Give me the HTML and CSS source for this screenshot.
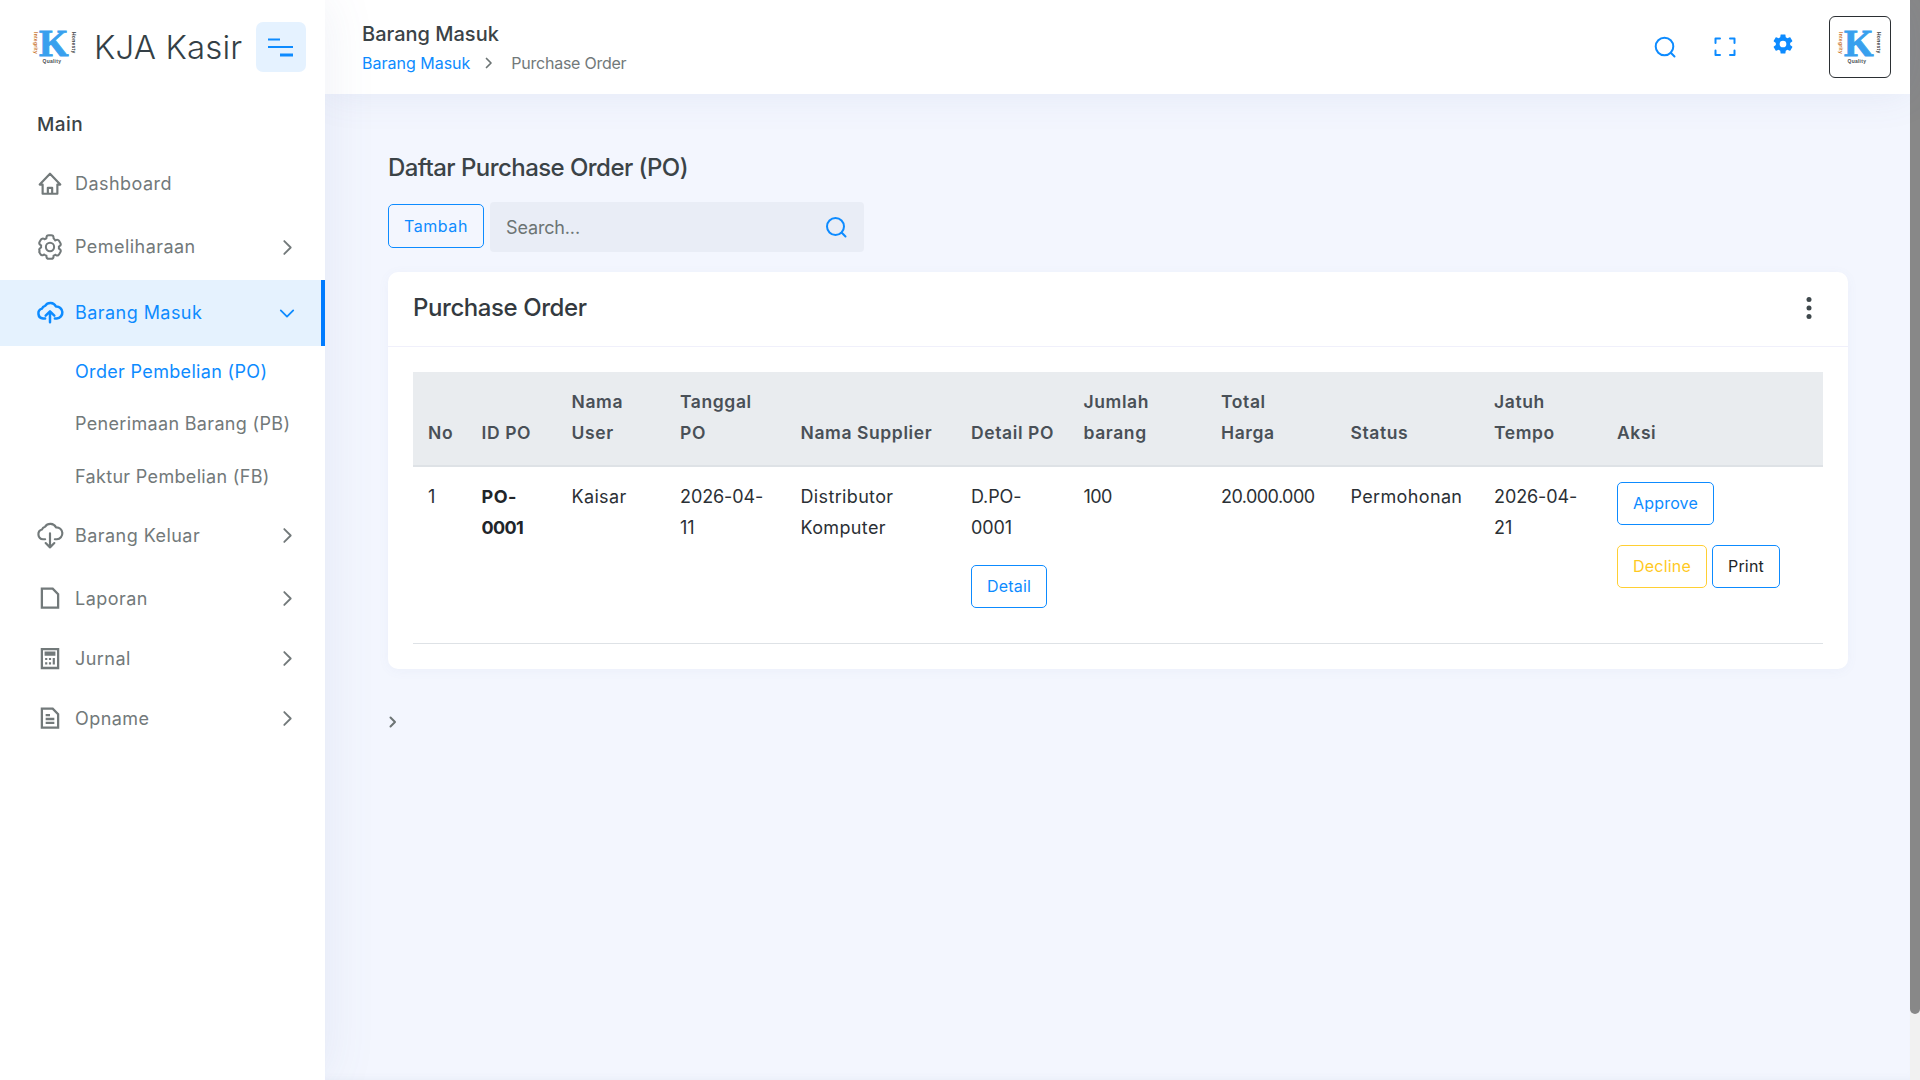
FILE: index.html
```html
<!DOCTYPE html>
<html lang="id">
<head>
<meta charset="utf-8">
<title>KJA Kasir</title>
<link rel="stylesheet" href="styles.css">
</head>
<body>
<div class="app">
  <aside class="sidebar">
    <div class="brand">
      <svg class="logo" viewBox="0 0 44 34" width="44" height="34">
        <text class="logo-k" x="6" y="26">K</text>
        <text class="logo-int" transform="translate(0.5 2) rotate(90)">Integrity</text>
        <text class="logo-hon" transform="translate(38.500 2) rotate(90)">Honesty</text>
        <text class="logo-qua" x="9.500" y="33">Quality</text>
      </svg>
      <span class="brand-name">KJA Kasir</span>
      <button class="toggle" type="button" aria-label="menu">
        <svg viewBox="0 0 26 20" width="26" height="20"><path class="bar" d="M0 2.500h12" stroke-width="2"/><path class="bar" d="M0 10h25" stroke-width="2"/><path class="bar" d="M12 18h13" stroke-width="3"/></svg>
      </button>
    </div>
    <div class="menu-label">Main</div>
    <nav class="menu">
      <a class="item short">
        <svg class="ico" viewBox="0 0 24 24"><path class="line" d="M2.500 12.500 12 2.500l9.500 10H18.800V21H5.200V12.500z M10 21V15.500h4V21"/></svg>
        <span class="label">Dashboard</span>
      </a>
      <a class="item">
        <svg class="ico" viewBox="1 1 22 22"><path class="line thin" d="M2.845 16.136l1 1.730c.531.917 1.809 1.261 2.730.730l.529-.306A8.100 8.100 0 0 0 9 19.402V20c0 1.103.897 2 2 2h2c1.103 0 2-.897 2-2v-.598a8.132 8.132 0 0 0 1.484-.866l.530.306c.923.530 2.198.188 2.731-.731l.999-1.729a2.001 2.001 0 0 0-.731-2.732l-.505-.292a7.718 7.718 0 0 0 0-1.720l.505-.292a2.002 2.002 0 0 0 .731-2.732l-.999-1.729c-.531-.920-1.808-1.265-2.731-.732l-.530.306A8.200 8.200 0 0 0 15 4.598V4c0-1.103-.897-2-2-2h-2c-1.103 0-2 .897-2 2v.598a8.132 8.132 0 0 0-1.484.866l-.530-.306c-.921-.533-2.200-.187-2.730.731l-1 1.730a2.002 2.002 0 0 0 .731 2.732l.505.292a7.683 7.683 0 0 0 0 1.719l-.505.292a2.002 2.002 0 0 0-.731 2.732z"/><circle class="line thin" cx="12" cy="12" r="3.500"/></svg>
        <span class="label">Pemeliharaan</span>
        <svg class="chev" viewBox="0 0 12 18"><path class="line" d="M2.500 2l7 7-7 7"/></svg>
      </a>
      <a class="item active">
        <svg class="ico" viewBox="0 0 24 24"><path class="line bold" d="M7.500 17H5.600A4.600 4.600 0 0 1 4.600 8 4 4 0 0 1 7.500 5.400 5.800 5.800 0 0 1 17.500 6 5.200 5.200 0 0 1 18.300 17H16.500"/><path class="line bold" d="M12 20.500V10.500M8 14.500l4-4 4 4"/></svg>
        <span class="label">Barang Masuk</span>
        <svg class="chev-down" viewBox="0 0 18 12"><path class="line" d="M2 2.500l7 7 7-7"/></svg>
      </a>
      <div class="sub">
        <a class="sub-item on">Order Pembelian (PO)</a>
        <a class="sub-item">Penerimaan Barang (PB)</a>
        <a class="sub-item">Faktur Pembelian (FB)</a>
      </div>
      <a class="item">
        <svg class="ico" viewBox="0 0 24 24"><path class="line" d="M7.500 15H5.600A4.600 4.600 0 0 1 4.600 6 4 4 0 0 1 7.500 3.400 5.800 5.800 0 0 1 17.500 4 5.200 5.200 0 0 1 18.300 15H16.500"/><path class="line" d="M12 9.500V22.500M8 18.500l4 4 4-4"/></svg>
        <span class="label">Barang Keluar</span>
        <svg class="chev" viewBox="0 0 12 18"><path class="line" d="M2.500 2l7 7-7 7"/></svg>
      </a>
      <a class="item short">
        <svg class="ico" viewBox="0 0 24 24"><path class="doc" d="M4.500 2.500h10l5 5v12.500h-15z"/></svg>
        <span class="label">Laporan</span>
        <svg class="chev" viewBox="0 0 12 18"><path class="line" d="M2.500 2l7 7-7 7"/></svg>
      </a>
      <a class="item short">
        <svg class="ico" viewBox="0 0 24 24"><path class="doc" d="M4.500 2.800h15v17.500h-15z"/><path class="fill" d="M7 5h10v4H7zM7.500 11h2v2h-2zM11 11h2v2h-2zM14.500 11h2v6h-2zM7.500 15h2v2h-2zM11 15h2v2h-2z"/></svg>
        <span class="label">Jurnal</span>
        <svg class="chev" viewBox="0 0 12 18"><path class="line" d="M2.500 2l7 7-7 7"/></svg>
      </a>
      <a class="item short">
        <svg class="ico" viewBox="0 0 24 24"><path class="doc" d="M4.500 2.500h10l5 5v12.500h-15z"/><path class="doc" d="M8 8.500h4M8 12h8M8 15.500h8"/></svg>
        <span class="label">Opname</span>
        <svg class="chev" viewBox="0 0 12 18"><path class="line" d="M2.500 2l7 7-7 7"/></svg>
      </a>
    </nav>
  </aside>

  <div class="main">
    <header class="topbar">
      <div class="crumbs">
        <div class="page-title">Barang Masuk</div>
        <div class="trail">
          <a class="trail-link">Barang Masuk</a>
          <svg class="trail-sep" viewBox="0 0 8 12"><path class="line thin" d="M1.500 1.500l4.500 4.500-4.500 4.500"/></svg>
          <span class="trail-now">Purchase Order</span>
        </div>
      </div>
      <div class="tools">
        <svg class="tool lens" viewBox="0 0 24 24"><circle class="line" cx="11.500" cy="11.500" r="8.800"/><path class="line" d="M17.800 17.800l3.700 3.700"/></svg>
        <svg class="tool" viewBox="0 0 24 24"><path class="line" d="M2.500 8V3.500h4.500M17 3.500h4.500V8M21.500 15.500v4.500H17M7 20H2.500v-4.500"/></svg>
        <svg class="tool gear" viewBox="0 0 24 24"><path class="fill" d="M12,15.500A3.500,3.500 0 0,1 8.500,12A3.500,3.500 0 0,1 12,8.500A3.500,3.500 0 0,1 15.500,12A3.500,3.500 0 0,1 12,15.500M19.430,12.970C19.470,12.650 19.500,12.330 19.500,12C19.500,11.670 19.470,11.340 19.430,11L21.540,9.370C21.730,9.220 21.780,8.950 21.660,8.730L19.660,5.270C19.540,5.050 19.270,4.960 19.050,5.050L16.560,6.050C16.040,5.660 15.500,5.320 14.870,5.070L14.500,2.420C14.460,2.180 14.250,2 14,2H10C9.750,2 9.540,2.180 9.500,2.420L9.130,5.070C8.500,5.320 7.960,5.660 7.440,6.050L4.950,5.050C4.730,4.960 4.460,5.050 4.340,5.270L2.340,8.730C2.210,8.950 2.270,9.220 2.460,9.370L4.570,11C4.530,11.340 4.500,11.670 4.500,12C4.500,12.330 4.530,12.650 4.570,12.970L2.460,14.630C2.270,14.780 2.210,15.050 2.340,15.270L4.340,18.730C4.460,18.950 4.730,19.030 4.950,18.950L7.440,17.940C7.960,18.340 8.500,18.680 9.130,18.930L9.500,21.580C9.540,21.820 9.750,22 10,22H14C14.250,22 14.460,21.820 14.500,21.580L14.870,18.930C15.500,18.670 16.040,18.340 16.560,17.940L19.050,18.950C19.270,19.030 19.540,18.950 19.660,18.730L21.660,15.270C21.780,15.050 21.730,14.780 21.540,14.630L19.430,12.970Z"/></svg>
      </div>
      <div class="avatar">
        <svg class="logo" viewBox="0 0 44 34" width="44" height="34">
          <text class="logo-k" x="6" y="26">K</text>
          <text class="logo-int" transform="translate(0.5 2) rotate(90)">Integrity</text>
          <text class="logo-hon" transform="translate(38.500 2) rotate(90)">Honesty</text>
          <text class="logo-qua" x="9.500" y="33">Quality</text>
        </svg>
      </div>
    </header>

    <main class="content">
      <h1 class="heading">Daftar Purchase Order (PO)</h1>
      <div class="toolbar">
        <a class="btn btn-blue add">Tambah</a>
        <div class="search">
          <span class="search-text">Search...</span>
          <svg class="search-ico" viewBox="0 0 24 24"><circle class="line" cx="11.500" cy="11.500" r="8.500"/><path class="line" d="M17.800 17.800l3.700 3.700"/></svg>
        </div>
      </div>
      <section class="card">
        <div class="card-head">
          <h2 class="card-title">Purchase Order</h2>
          <svg class="dots" viewBox="0 0 6 22" width="6" height="22"><circle cx="3" cy="2.500" r="2.500"/><circle cx="3" cy="11" r="2.500"/><circle cx="3" cy="19.500" r="2.500"/></svg>
        </div>
        <div class="card-body">
          <table class="po">
            <thead>
              <tr>
                <th>No</th><th>ID PO</th><th>Nama<br>User</th><th>Tanggal<br>PO</th><th>Nama Supplier</th><th>Detail PO</th><th>Jumlah<br>barang</th><th>Total<br>Harga</th><th>Status</th><th>Jatuh<br>Tempo</th><th>Aksi</th>
              </tr>
            </thead>
            <tbody>
              <tr>
                <td>1</td>
                <td class="strong">PO-<span class="tight">0001</span></td>
                <td>Kaisar</td>
                <td class="num">2026-04-11</td>
                <td>Distributor Komputer</td>
                <td><span class="num">D.PO-0001</span><a class="btn btn-blue detail">Detail</a></td>
                <td class="money">100</td>
                <td class="money">20.000.000</td>
                <td>Permohonan</td>
                <td class="num">2026-04-21</td>
                <td>
                  <div class="acts">
                    <div class="act-row"><a class="btn btn-blue approve">Approve</a></div>
                    <div class="act-row"><a class="btn btn-yellow decline">Decline</a><a class="btn btn-dark print">Print</a></div>
                  </div>
                </td>
              </tr>
            </tbody>
          </table>
        </div>
      </section>
      <svg class="pager" viewBox="0 0 8 12" width="8" height="12"><path class="line" d="M1.500 1.500l4.500 4.500-4.500 4.500"/></svg>
    </main>
  </div>
</div>
<div class="scrollbar"><div class="thumb"></div></div>
</body>
</html>
```
FILE: styles.css
```css
* { box-sizing: border-box; }
html, body { margin: 0; height: 1080px; overflow: hidden; }
body {
  display: flex;
  font-family: Inter, "Open Sans", sans-serif;
  font-size: 18px;
  color: #212529;
  background: #f3f6fe;
  letter-spacing: .45px;
}
a { color: inherit; text-decoration: none; }
h1, h2 { margin: 0; }
svg { display: block; flex: none; }
.line { fill: none; stroke: currentColor; stroke-width: 2; stroke-linecap: round; stroke-linejoin: round; }
.line.thin { stroke-width: 1.700; }
.line.bold { stroke-width: 2.300; }
.doc { fill: none; stroke: currentColor; stroke-width: 2.100; stroke-linejoin: miter; }
.fill { fill: currentColor; }

.app { flex: 1; display: flex; min-width: 0; height: 1080px; }
.scrollbar { width: 10px; height: 1080px; background: #f1f1f1; }
.thumb { height: 1014px; background: #888; border-radius: 0 0 5px 5px; }

/* Sidebar */
.sidebar {
  width: 325px;
  flex: none;
  background: #fff;
  box-shadow: 0 0 50px rgba(90, 110, 170, .10);
  position: relative;
  z-index: 2;
}
.brand { height: 94px; display: flex; align-items: center; padding: 0 19px 0 33px; }
.logo { overflow: visible; }
.logo-k { font: 700 38px "Liberation Serif", serif; letter-spacing: 0; fill: #38a0ee; stroke: #38a0ee; stroke-width: .9px; }
.logo-int { font: 700 5px "Liberation Sans", sans-serif; letter-spacing: .25px; fill: #c9742c; }
.logo-hon { font: 700 5px "Liberation Sans", sans-serif; letter-spacing: .25px; fill: #3a3f44; }
.logo-qua { font: 700 5px "Liberation Sans", sans-serif; letter-spacing: .25px; fill: #4a4f54; }
.brand-name { margin-left: 17px; font-size: 33px; font-weight: 300; color: #343f46; letter-spacing: .15px; white-space: nowrap; }
.toggle {
  margin-left: auto; width: 50px; height: 50px; padding: 0;
  border: 0; border-radius: 7px; background: #e5f2ff; color: #0d8bff;
  display: flex; align-items: center; justify-content: center;
}
.bar { fill: none; stroke: currentColor; }
.menu-label { height: 60px; display: flex; align-items: center; padding-left: 37px; font-size: 19px; font-weight: 500; color: #3b4347; }
.menu { display: flex; flex-direction: column; }
.item { height: 66px; display: flex; align-items: center; padding: 0 32px 0 37px; color: #72797a; }
.item.short { height: 60px; }
.ico { width: 26px; height: 26px; overflow: visible; }
.label { margin-left: 12px; flex: 1; padding-bottom: 1px; }
.chev { width: 11px; height: 17px; }
.chev-down { width: 16px; height: 11px; margin-right: -2px; }
.item.active { background: #e5f2fe; color: #0d8bff; border-right: 4px solid #007bff; padding-right: 28px; }
.sub { display: flex; flex-direction: column; padding-left: 75px; }
.sub-item { height: 52.330px; display: flex; align-items: center; color: #72797a; white-space: nowrap; letter-spacing: .33px; padding-bottom: 1px; }
.sub-item.on { color: #0d8bff; }

/* Top bar */
.main { flex: 1; min-width: 0; display: flex; flex-direction: column; }
.topbar {
  height: 94px; flex: none;
  display: flex; align-items: center;
  padding: 0 19px 0 37px;
  background: #fff;
  box-shadow: 0 0 40px rgba(90, 110, 170, .10);
  position: relative;
  z-index: 1;
}
.crumbs { flex: 1; padding-top: 2px; }
.page-title { font-size: 20px; font-weight: 500; color: #3b4347; line-height: 30px; letter-spacing: 0; }
.trail { display: flex; align-items: center; height: 28px; font-size: 16px; letter-spacing: 0; }
.trail-link { color: #0d8bff; }
.trail-sep { width: 8px; height: 12px; margin: 0 18px 0 15px; color: #6c7474; }
.trail-now { color: #72797a; letter-spacing: -.25px; }
.tools { display: flex; gap: 33.600px; color: #0d8bff; margin-right: 34.200px; }
.tool { width: 24px; height: 24px; }
.lens { margin-right: 2.400px; }
.gear { margin-top: -3px; transform: scale(.96); }
.avatar {
  width: 62px; height: 62px; border: 1.500px solid #2b2f33; border-radius: 6px;
  display: flex; align-items: center; justify-content: center; background: #fff;
}

/* Content */
.content {
  flex: 1; padding: 57px 62px 0 63px; min-height: 0;
  box-shadow: inset 0 -6px 8px -6px rgba(90, 110, 170, .08);
}
.heading { font-size: 24px; font-weight: 500; line-height: 34px; color: #3b4347; letter-spacing: -.55px; }
.toolbar { display: flex; align-items: flex-start; gap: 6px; margin-top: 17px; }
.btn {
  display: inline-flex; align-items: center; justify-content: center;
  height: 43px; border: 1px solid #0d8bff; border-radius: 5px;
  font-size: 16px; letter-spacing: .2px; background: transparent;
}
.btn-blue { color: #0d8bff; }
.btn-yellow { color: #ffc91f; border-color: #ffcf33; }
.btn-dark { color: #212529; }
.add { width: 96px; height: 44px; margin-top: 2px; letter-spacing: .55px; }
.search {
  width: 374px; height: 50px; border-radius: 4px; background: #e9edf6;
  display: flex; align-items: center; justify-content: space-between;
  padding: 0 16px 0 16px;
}
.search-text { color: #6c7474; letter-spacing: -.15px; }
.search-ico { width: 24px; height: 24px; color: #0d8bff; }

.card { margin-top: 20px; background: #fff; border-radius: 10px; box-shadow: 0 2px 12px rgba(90, 110, 170, .05); }
.card-head {
  height: 75px; display: flex; align-items: center; justify-content: space-between;
  padding: 0 36px 3px 25px; border-bottom: 1px solid #f0f0fb;
}
.card-title { font-size: 24px; font-weight: 500; color: #343a40; letter-spacing: -.42px; }
.dots { fill: #3f484c; }
.card-body { padding: 25px 25px 25px 25px; }
.po { width: 1410px; table-layout: fixed; border-collapse: separate; border-spacing: 0; line-height: 31px; }
.po th {
  padding: 14px 0 17px 15px; text-align: left; vertical-align: bottom; white-space: nowrap;
  background: #e9ecef; border-bottom: 2px solid #dee2e6;
  font-weight: 600; font-size: 17.500px; color: #495057; letter-spacing: .6px;
}
.po td { padding: 14px 15px 35px 15px; vertical-align: top; border-bottom: 1px solid #dee2e6; color: #2b3035; letter-spacing: .35px; }
.po .strong { font-weight: 700; color: #212529; letter-spacing: .5px; }
.po .tight { letter-spacing: -.6px; }
.po .num { letter-spacing: -.1px; }
.po .money { letter-spacing: -.55px; }
.po th:nth-child(1) { width: 53.500px; }
.po th:nth-child(2) { width: 90px; }
.po th:nth-child(3) { width: 108.500px; }
.po th:nth-child(4) { width: 120.500px; }
.po th:nth-child(5) { width: 170.500px; }
.po th:nth-child(6) { width: 112.500px; }
.po th:nth-child(7) { width: 137.500px; }
.po th:nth-child(8) { width: 129.500px; }
.po th:nth-child(9) { width: 143.500px; }
.po th:nth-child(10) { width: 123px; }
.detail { display: flex; width: 76px; margin-top: 22px; letter-spacing: .2px; }
.acts { display: flex; flex-direction: column; gap: 20px; margin-top: 1px; }
.act-row { display: flex; gap: 5px; }
.approve { width: 97px; }
.decline { width: 90px; }
.print { width: 68px; }
.pager { margin-top: 47px; margin-left: 1px; color: #6c7474; }
```
